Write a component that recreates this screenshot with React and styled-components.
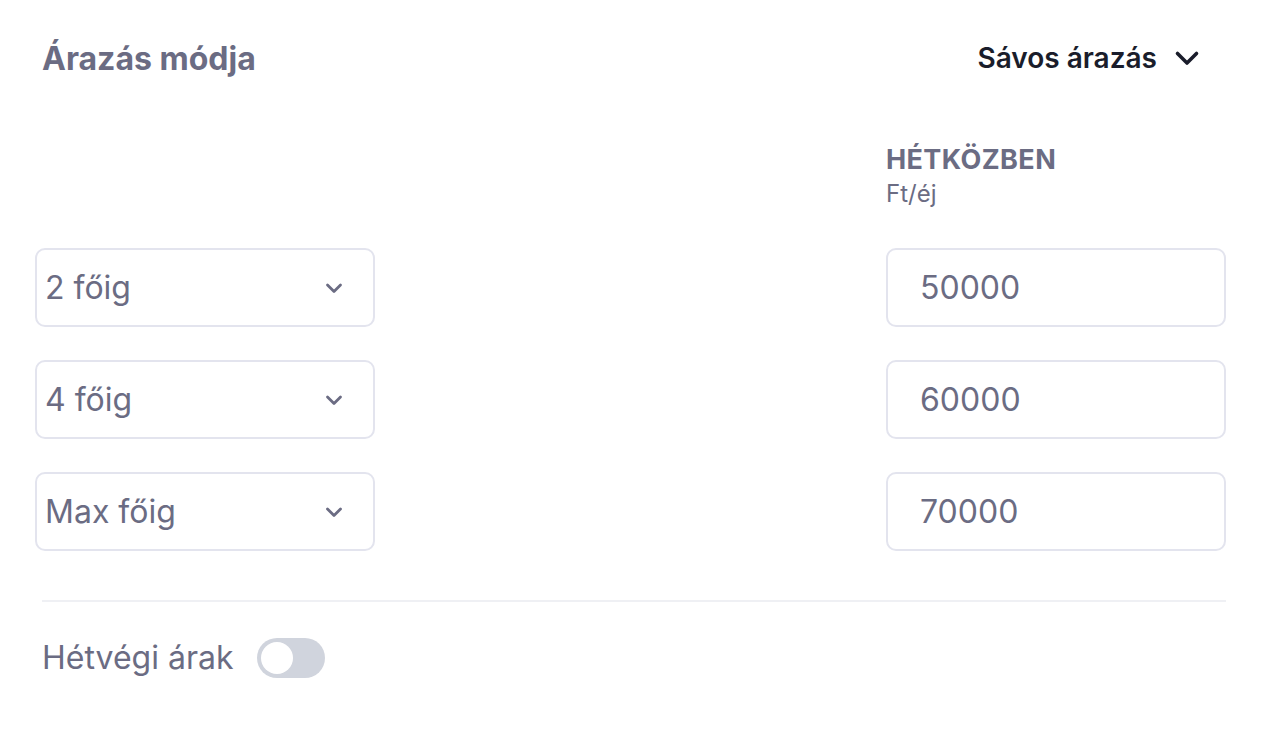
import styled, { createGlobalStyle } from "styled-components";

const GlobalStyle = createGlobalStyle`
  body {
    margin: 0;
    background: #ffffff;
    font-family: "Inter", "Noto Sans", sans-serif;
  }
`;

const Page = styled.div`
  width: 1278px;
  height: 748px;
  padding: 0 52px 0 35px;
  box-sizing: border-box;
`;

const Header = styled.div`
  display: flex;
  justify-content: space-between;
  align-items: center;
  height: 116px;
  padding: 0 26px 0 7px;
`;

const Title = styled.h2`
  margin: 0;
  font-size: 32px;
  font-weight: 700;
  color: #6b6c83;
`;

const ModeButton = styled.button`
  display: flex;
  align-items: center;
  gap: 17px;
  border: none;
  background: none;
  padding: 0;
  font-family: inherit;
  font-size: 28px;
  font-weight: 600;
  color: #1a1d2b;
`;

const ColumnHead = styled.div`
  display: flex;
  justify-content: flex-end;
  padding-top: 28px;
  height: 132px;
  box-sizing: border-box;
`;

const HeadCell = styled.div`
  width: 340px;
`;

const HeadTitle = styled.div`
  font-size: 27px;
  line-height: 32px;
  font-weight: 700;
  letter-spacing: 0.4px;
  color: #6b6c83;
`;

const HeadUnit = styled.div`
  margin-top: 4px;
  font-size: 24px;
  line-height: 28px;
  color: #6b6c83;
`;

const Rows = styled.div`
  display: flex;
  flex-direction: column;
  gap: 33px;
`;

const Row = styled.div`
  display: flex;
  justify-content: space-between;
`;

const Field = styled.div`
  width: 340px;
  height: 79px;
  box-sizing: border-box;
  border: 2px solid #e3e4ee;
  border-radius: 10px;
  display: flex;
  align-items: center;
  justify-content: space-between;
  padding: ${(p) => (p.$select ? "0 29px 0 8px" : "0 0 0 32px")};
  font-size: 32px;
  color: #6b6c83;
`;

const Divider = styled.hr`
  margin: 49px 0 0 7px;
  border: none;
  border-top: 2px solid #eff0f4;
`;

const ToggleRow = styled.div`
  display: flex;
  align-items: center;
  gap: 24px;
  padding: 36px 0 0 7px;
  font-size: 32px;
  line-height: 40px;
  color: #6b6c83;
`;

const Switch = styled.div`
  width: 68px;
  height: 40px;
  border-radius: 20px;
  background: #d0d4dd;
  padding: 4px;
  box-sizing: border-box;
`;

const Knob = styled.div`
  width: 32px;
  height: 32px;
  border-radius: 50%;
  background: #ffffff;
`;

function Chevron({ size, color, stroke, d }) {
  return (
    <svg width={size} height={size} viewBox={`0 0 ${size} ${size}`} fill="none">
      <path
        d={d}
        stroke={color}
        strokeWidth={stroke}
        strokeLinecap="round"
        strokeLinejoin="round"
      />
    </svg>
  );
}

const rows = [
  { label: "2 főig", price: "50000" },
  { label: "4 főig", price: "60000" },
  { label: "Max főig", price: "70000" },
];

export default function App() {
  return (
    <>
      <GlobalStyle />
      <Page>
        <Header>
          <Title>Árazás módja</Title>
          <ModeButton>
            Sávos árazás
            <Chevron size={26} color="#1a1d2b" stroke={3.6} d="M3.5 8.5l9.5 9.5 9.5-9.5" />
          </ModeButton>
        </Header>
        <ColumnHead>
          <HeadCell>
            <HeadTitle>HÉTKÖZBEN</HeadTitle>
            <HeadUnit>Ft/éj</HeadUnit>
          </HeadCell>
        </ColumnHead>
        <Rows>
          {rows.map((r) => (
            <Row key={r.label}>
              <Field $select>
                {r.label}
                <Chevron size={20} color="#6b6c83" stroke={2.8} d="M3.5 7l6.5 6.5 6.5-6.5" />
              </Field>
              <Field>{r.price}</Field>
            </Row>
          ))}
        </Rows>
        <Divider />
        <ToggleRow>
          Hétvégi árak
          <Switch>
            <Knob />
          </Switch>
        </ToggleRow>
      </Page>
    </>
  );
}
